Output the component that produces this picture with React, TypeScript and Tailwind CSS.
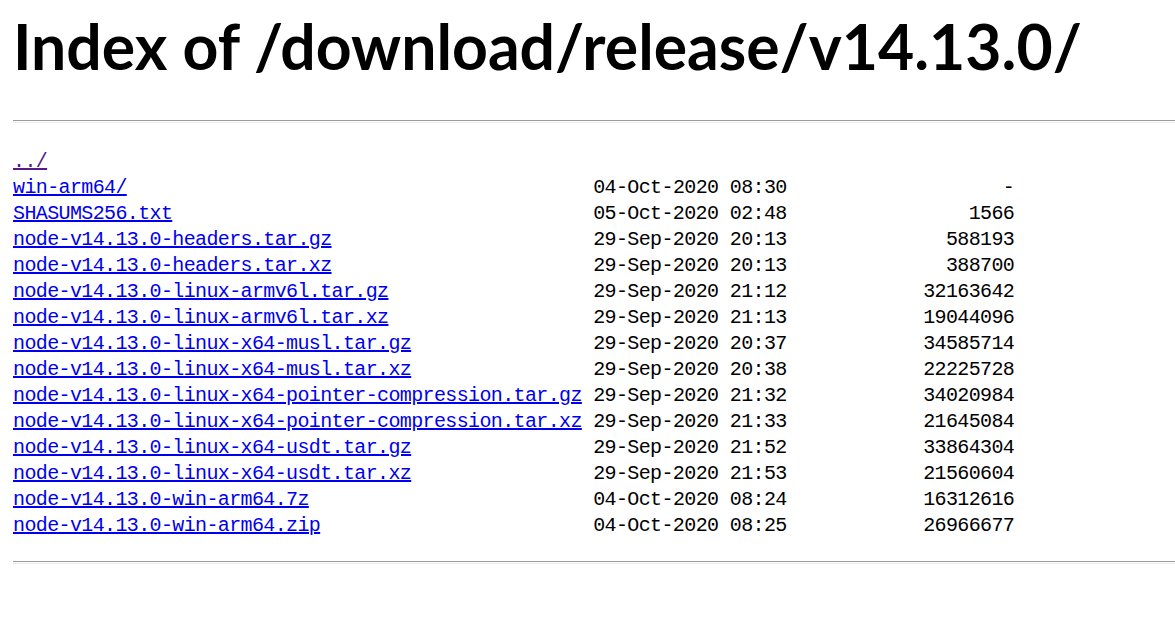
import React from 'react';

type Entry = { name: string; date?: string; size?: string; visited?: boolean };

const entries: Entry[] = [
  { name: '../', visited: true },
  { name: 'win-arm64/', date: '04-Oct-2020 08:30', size: '-' },
  { name: 'SHASUMS256.txt', date: '05-Oct-2020 02:48', size: '1566' },
  { name: 'node-v14.13.0-headers.tar.gz', date: '29-Sep-2020 20:13', size: '588193' },
  { name: 'node-v14.13.0-headers.tar.xz', date: '29-Sep-2020 20:13', size: '388700' },
  { name: 'node-v14.13.0-linux-armv6l.tar.gz', date: '29-Sep-2020 21:12', size: '32163642' },
  { name: 'node-v14.13.0-linux-armv6l.tar.xz', date: '29-Sep-2020 21:13', size: '19044096' },
  { name: 'node-v14.13.0-linux-x64-musl.tar.gz', date: '29-Sep-2020 20:37', size: '34585714' },
  { name: 'node-v14.13.0-linux-x64-musl.tar.xz', date: '29-Sep-2020 20:38', size: '22225728' },
  { name: 'node-v14.13.0-linux-x64-pointer-compression.tar.gz', date: '29-Sep-2020 21:32', size: '34020984' },
  { name: 'node-v14.13.0-linux-x64-pointer-compression.tar.xz', date: '29-Sep-2020 21:33', size: '21645084' },
  { name: 'node-v14.13.0-linux-x64-usdt.tar.gz', date: '29-Sep-2020 21:52', size: '33864304' },
  { name: 'node-v14.13.0-linux-x64-usdt.tar.xz', date: '29-Sep-2020 21:53', size: '21560604' },
  { name: 'node-v14.13.0-win-arm64.7z', date: '04-Oct-2020 08:24', size: '16312616' },
  { name: 'node-v14.13.0-win-arm64.zip', date: '04-Oct-2020 08:25', size: '26966677' },
];

function Rule() {
  return <div className="h-[3px] border-t border-b border-t-[#9a9a9a] border-b-[#ececec]" />;
}

export default function App() {
  return (
    <div className="min-h-[625px] bg-white pl-[13px] overflow-hidden text-black">
      <h1 className="pt-[6px] text-[62.5px] leading-[80px] font-bold whitespace-nowrap font-['Lato','Noto_Sans',sans-serif]">
        Index of /download/release/v14.13.0/
      </h1>
      <div className="mt-[34px]">
        <Rule />
      </div>
      <pre className="mt-[26px] text-[20px] leading-[26px] tracking-[-0.625px] font-['Liberation_Mono',monospace]">
        {entries.map((e) => (
          <div key={e.name}>
            <a href="#" className={e.visited ? 'text-[#551a8b] underline' : 'text-[#0000ee] underline'}>
              {e.name}
            </a>
            {e.date && ' '.repeat(51 - e.name.length) + e.date + (e.size ?? '').padStart(20, ' ')}
          </div>
        ))}
      </pre>
      <div className="mt-[22px]">
        <Rule />
      </div>
    </div>
  );
}
